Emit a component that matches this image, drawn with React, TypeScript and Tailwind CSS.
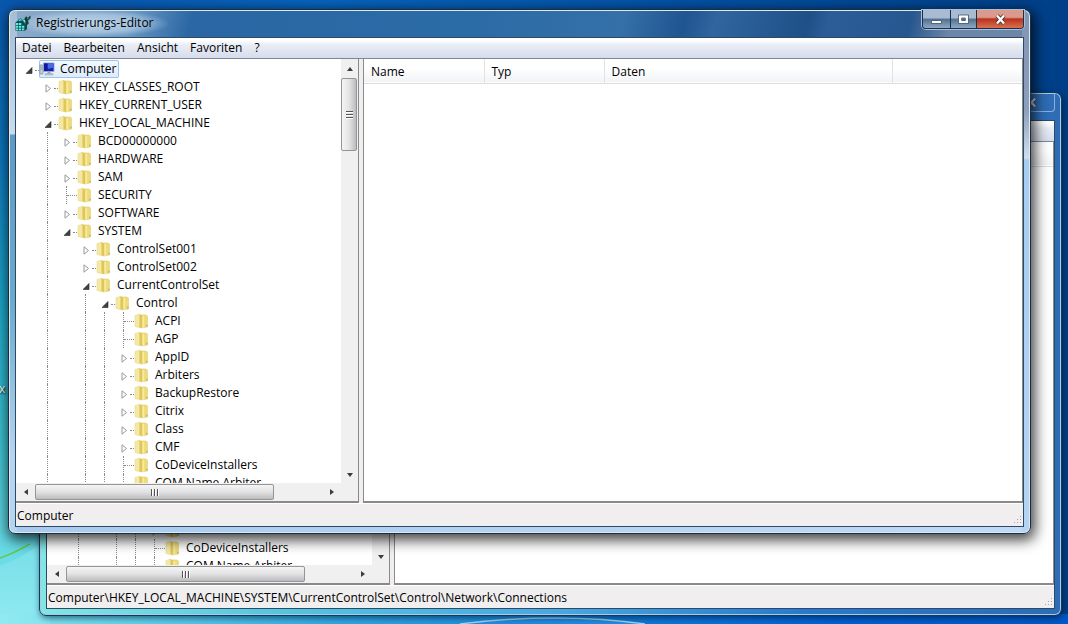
import clsx from "clsx"

type TreeNode = {
    label: string;
    level: number;
    state: "open" | "closed" | "leaf";
};

const nodes: TreeNode[] = [
    { label: "Computer", level: 0, state: "open" },
    { label: "HKEY_CLASSES_ROOT", level: 1, state: "closed" },
    { label: "HKEY_CURRENT_USER", level: 1, state: "closed" },
    { label: "HKEY_LOCAL_MACHINE", level: 1, state: "open" },
    { label: "BCD00000000", level: 2, state: "closed" },
    { label: "HARDWARE", level: 2, state: "closed" },
    { label: "SAM", level: 2, state: "closed" },
    { label: "SECURITY", level: 2, state: "leaf" },
    { label: "SOFTWARE", level: 2, state: "closed" },
    { label: "SYSTEM", level: 2, state: "open" },
    { label: "ControlSet001", level: 3, state: "closed" },
    { label: "ControlSet002", level: 3, state: "closed" },
    { label: "CurrentControlSet", level: 3, state: "open" },
    { label: "Control", level: 4, state: "open" },
    { label: "ACPI", level: 5, state: "leaf" },
    { label: "AGP", level: 5, state: "leaf" },
    { label: "AppID", level: 5, state: "closed" },
    { label: "Arbiters", level: 5, state: "closed" },
    { label: "BackupRestore", level: 5, state: "closed" },
    { label: "Citrix", level: 5, state: "closed" },
    { label: "Class", level: 5, state: "closed" },
    { label: "CMF", level: 5, state: "closed" },
    { label: "CoDeviceInstallers", level: 5, state: "leaf" },
    { label: "COM Name Arbiter", level: 5, state: "leaf" },
];

// levels whose branch goes on below the visible part of the tree
const openBranches = [1, 3, 4];

const menus = ["Datei", "Bearbeiten", "Ansicht", "Favoriten", "?"];

const FolderIcon = () => (
    <svg viewBox="0 0 16 16" className="h-4 w-4 shrink-0" aria-hidden="true">
        <path d="M1 2.500 6 1.200v13.500L1 13.400z" fill="#f4e9a4" stroke="#e6d88c" strokeWidth=".6" />
        <path d="M7.500 2h4.200l1.700.9V14l-5.900.8z" fill="#eedb7c" stroke="#dfc860" strokeWidth=".6" />
        <path d="m5.500.9 2.800 1.500v13.200l-2.800-1.400z" fill="#e2c557" />
        <path d="m8.300 3 1.800-.6v12l-1.800.6z" fill="#f6ea9e" />
        <path d="M12 11.800h1.600v1.700H12z" fill="#b3bb74" />
    </svg>
)

const ComputerIcon = () => (
    <svg viewBox="0 0 16 16" className="h-4 w-4 shrink-0" aria-hidden="true">
        <path d="M1 4h3v9H1z" fill="#c9d4de" stroke="#7d8b99" strokeWidth=".7" />
        <path d="M1.800 6h1.500M1.800 8h1.500" stroke="#5c6b78" strokeWidth=".7" />
        <path d="M4.500 2h10.500v8.500H4.500z" fill="#1621b8" stroke="#9aaccd" strokeWidth=".9" />
        <path d="M8.500 2.500h6v4l-6 1.500z" fill="#4a6be0" />
        <path d="M5 2.500h3.500v7.500H5z" fill="#1017a0" />
        <path d="M8.500 11h3v1.500h-3z" fill="#98a6b4" />
        <path d="M6.500 12.500h7l.8 1.500H5.700z" fill="#c3ccd5" stroke="#8996a3" strokeWidth=".5" />
    </svg>
)

const RegistryIcon = () => (
    <svg viewBox="0 0 16 16" className="h-4 w-4 shrink-0" aria-hidden="true">
        <path d="M.5 7.500 3 5.500l9 .5v8l-2 1.800H.5z" fill="#0a4b50" />
        <path d="M1 8h2.300v2H1zM4 8h2.300v2H4zM1 10.700h2.300v2H1zM4 10.700h2.300v2H4zM7 10.700h2.300v2H7zM1 13.400h2.300v1.800H1zM4 13.400h2.300v1.800H4zM7 13.400h2.300v1.800H7z" fill="#66eee2" />
        <path d="M7 5.500 9.500 4l3 2.500-2 3z" fill="#0f7f78" />
        <path d="m8 5.500 1.500-.7 1.700 1.500-1.200 1.500z" fill="#7ff3e6" />
        <path d="m9.500 3.500 1.500-2.300 1.600 1.600L15.500.5v3l-2.500 2 .8 3-2.300 2-1-3.500z" fill="#173c3a" />
        <path d="m12 3.500 2.500-1.500-1.700 2.500z" fill="#3fae9f" />
        <path d="M3 5.200 5.500 3.500l1.700 1.200-2.400 2z" fill="#47cfc3" stroke="#0a4b50" strokeWidth=".5" />
    </svg>
)

const Expander = ({ state }: { state: TreeNode["state"] }) => {
    if (state === "leaf") {
        return (
            <span className="flex h-full w-[19px] shrink-0 items-center">
                <span className="ml-2 h-full border-l border-dotted border-[#8a8a8a]" />
                <span className="flex-1 border-t border-dotted border-[#8a8a8a]" />
            </span>
        )
    }
    return (
        <span className="flex h-full w-[19px] shrink-0 items-center pt-[2px] pl-[6px]">
            <svg viewBox="0 0 7 9" className="h-[9px] w-[7px]" aria-hidden="true">
                {state === "open"
                    ? <path d="M6 1.500V7.500H0z" fill="#404040" stroke="#262626" strokeWidth=".6" />
                    : <path d="M1 .8 5.500 4.500 1 8.200z" fill="#fff" stroke="#989898" strokeWidth="1" />}
            </svg>
            <span className="ml-[2px] flex-1 border-t border-dotted border-[#8a8a8a]" />
        </span>
    )
}

const TreeRow = ({ node }: { node: TreeNode }) => {
    const root = node.level === 0;
    return (
        <li
            role="treeitem"
            aria-level={node.level + 1}
            aria-selected={root}
            aria-expanded={node.state === "leaf" ? undefined : node.state === "open"}
            className="flex h-[18px] items-center pl-1"
        >
            {Array.from({ length: node.level }, (_, level) => (
                <span key={level} className="h-full w-[19px] shrink-0 pl-2">
                    {openBranches.includes(level) && (
                        <span className="block h-full border-l border-dotted border-[#8a8a8a]" />
                    )}
                </span>
            ))}
            <Expander state={node.state} />
            <span
                className={clsx(
                    "flex h-[18px] items-center gap-[5px] whitespace-nowrap",
                    root && "rounded-[2px] bg-gradient-to-b from-[#f3f8fe] to-[#dcebfc] pr-[2px] ring-1 ring-[#9cc3ec] ring-inset"
                )}
            >
                {root ? <ComputerIcon /> : <FolderIcon />}
                <span className="leading-4">{node.label}</span>
            </span>
        </li>
    )
}

const Arrow = ({ d }: { d: string }) => (
    <svg viewBox="0 0 8 8" className="h-2 w-2" aria-hidden="true">
        <path d={d} fill="#3c3c3c" />
    </svg>
)

const VerticalScroll = () => (
    <div className="flex w-[17px] shrink-0 flex-col bg-[#f0f0f0]">
        <button aria-label="Nach oben" className="flex h-[19px] items-center justify-center">
            <Arrow d="M4 2 7 6H1z" />
        </button>
        <div className="mr-px flex h-[73px] flex-col items-center justify-center gap-px rounded-[2px] border border-[#959595] bg-gradient-to-r from-[#f5f5f5] via-[#e4e4e6] to-[#bcbcc0]">
            <span className="h-[2px] w-[7px] border-t border-[#555] bg-white" />
            <span className="h-[2px] w-[7px] border-t border-[#555] bg-white" />
            <span className="h-[2px] w-[7px] border-t border-[#555] bg-white" />
        </div>
        <button aria-label="Nach unten" className="mt-auto flex h-[17px] items-center justify-center">
            <Arrow d="M4 6 7 2H1z" />
        </button>
    </div>
)

const HorizontalScroll = () => (
    <div className="flex h-[18px] shrink-0 bg-[#f0f0f0] pr-[17px]">
        <button aria-label="Nach links" className="flex w-[19px] items-center justify-center">
            <Arrow d="M2 4 6 1v6z" />
        </button>
        <div className="my-px flex w-[239px] items-center justify-center gap-px rounded-[2px] border border-[#959595] bg-gradient-to-b from-[#f5f5f5] via-[#e2e2e4] to-[#bcbcc0]">
            <span className="h-[7px] w-[2px] border-l border-[#555] bg-white" />
            <span className="h-[7px] w-[2px] border-l border-[#555] bg-white" />
            <span className="h-[7px] w-[2px] border-l border-[#555] bg-white" />
        </div>
        <button aria-label="Nach rechts" className="ml-auto flex w-[19px] items-center justify-center">
            <Arrow d="M6 4 2 1v6z" />
        </button>
    </div>
)

const WindowButtons = ({ active }: { active: boolean }) => (
    <div
        className={clsx(
            "flex h-[19px] rounded-b-[4px] border border-t-0",
            active ? "border-[#17304f] shadow-[0_0_0_1px_#a9bfd8]" : "border-[#8eb1dc]"
        )}
    >
        <button
            aria-label="Minimieren"
            className={clsx(
                "flex w-[28px] items-center justify-center rounded-bl-[3px] border-r",
                active ? "border-[#17304f] bg-gradient-to-b from-[#a9bbd0] from-45% via-[#52708f] via-50% to-[#8ea9c5]" : "border-[#8eb1dc]"
            )}
        >
            <svg viewBox="0 0 13 11" className="h-[11px] w-[13px]" aria-hidden="true">
                <path d="M1.500 6.500h10v3h-10z" fill="#fff" stroke="#3d4e61" strokeWidth=".8" />
            </svg>
        </button>
        <button
            aria-label="Maximieren"
            className={clsx(
                "flex w-[26px] items-center justify-center border-r",
                active ? "border-[#17304f] bg-gradient-to-b from-[#a9bbd0] from-45% via-[#52708f] via-50% to-[#8ea9c5]" : "border-[#8eb1dc]"
            )}
        >
            <svg viewBox="0 0 13 11" className="h-[11px] w-[13px]" aria-hidden="true">
                <path d="M1.500 1h10v8.500h-10zM4.700 4v2.500h3.600V4z" fill="#fff" fillRule="evenodd" stroke="#3d4e61" strokeWidth=".8" />
            </svg>
        </button>
        <button
            aria-label="Schließen"
            className={clsx(
                "flex w-[46px] items-center justify-center rounded-br-[3px]",
                active && "bg-gradient-to-b from-[#dc9a8c] from-40% via-[#b8301c] via-50% to-[#d9704f]"
            )}
        >
            <svg viewBox="0 0 13 11" className="h-[11px] w-[13px]" aria-hidden="true">
                <path d="m3 1.500 7 8M10 1.500l-7 8" stroke={active ? "#4a2a2a" : "#2c4a74"} strokeWidth="4" />
                <path d="m3 1.500 7 8M10 1.500l-7 8" stroke={active ? "#fff" : "#c9d4e2"} strokeWidth="2.400" />
            </svg>
        </button>
    </div>
)

const RegistryWindow = ({ active, path, className }: { active: boolean; path: string; className: string }) => (
    <section
        aria-label="Registrierungs-Editor"
        className={clsx("absolute flex flex-col rounded-[7px] border px-[6px] pb-[6px] inset-ring-1", className)}
    >
        <header className="flex h-[27px] shrink-0 items-start justify-between">
            <div
                className={clsx(
                    "flex h-full items-center gap-[5px] pr-4 pb-px",
                    active && "bg-[radial-gradient(closest-side,rgba(205,225,242,0.8),rgba(205,225,242,0.5)_65%,transparent)]"
                )}
            >
                <RegistryIcon />
                <h1>Registrierungs-Editor</h1>
            </div>
            <WindowButtons active={active} />
        </header>

        <div className="flex min-h-0 flex-1 flex-col border border-[#2c4966] bg-[#f0eeee]">
            <nav className="flex h-[21px] shrink-0 items-center border-b border-[#7f8796] bg-gradient-to-b from-white from-10% via-[#e9edf5] via-35% to-[#d6dcec]">
                {menus.map((menu) => (
                    <button key={menu} className="px-[6px]">{menu}</button>
                ))}
            </nav>

            <main className="flex min-h-0 flex-1">
                <div className="flex w-[343px] shrink-0 flex-col border-r border-b-2 border-[#8a8a8a] bg-white">
                    <div className="flex min-h-0 flex-1">
                        <ul role="tree" aria-label="Schlüssel" className="flex-1 overflow-hidden pt-px">
                            {nodes.map((node) => (
                                <TreeRow key={node.label} node={node} />
                            ))}
                        </ul>
                        <VerticalScroll />
                    </div>
                    <HorizontalScroll />
                </div>
                <div className="ml-1 flex-1 border-r border-b-2 border-l border-[#8a8a8a] bg-white">
                    <table className="w-full table-fixed border-collapse text-left">
                        <thead>
                            <tr className="h-6 border-b border-[#d9dbde] bg-gradient-to-b from-white from-40% to-[#f1f3f5]">
                                <th className="w-[120px] border-r border-[#dfe2e6] px-[7px] pt-[2px] pb-0 font-normal">Name</th>
                                <th className="w-[120px] border-r border-[#dfe2e6] px-[7px] pt-[2px] pb-0 font-normal">Typ</th>
                                <th className="w-[288px] border-r border-[#dfe2e6] px-[7px] pt-[2px] pb-0 font-normal">Daten</th>
                                <th aria-label="Leer" />
                            </tr>
                        </thead>
                    </table>
                </div>
            </main>

            <footer className="flex h-[23px] shrink-0 items-center justify-between border-t border-white pt-[2px] pl-px">
                <span>{path}</span>
                <svg viewBox="0 0 12 12" className="h-3 w-3 self-end" aria-hidden="true">
                    <path d="M9 2h1v1H9zM9 5h1v1H9zM9 8h1v1H9zM6 5h1v1H6zM6 8h1v1H6zM3 8h1v1H3z" fill="#a9a6a6" />
                </svg>
            </footer>
        </div>
    </section>
)

export default function App() {
    return (
        <div className="relative h-screen min-h-[480px] overflow-hidden [background:linear-gradient(to_right,#86e8f0,#62d4ec_12%,#2fa8e4_32%,#0f7cdc_58%,#0060d4_80%,#0058c8)_bottom/100%_10px_no-repeat,linear-gradient(to_right,transparent_3%,#0765c0_30%,#0452a6_65%,#003f88),linear-gradient(#0857b0,#0c78be_25%,#1faacb_50%,#3fc6d4_72%,#86e8f0)] font-['Open_Sans','Noto_Sans',sans-serif] text-[12px] leading-4 text-black">
            <svg viewBox="0 0 60 80" className="absolute bottom-0 left-0 h-20 w-[60px]" aria-hidden="true">
                <path d="M0 14C18 8 30 0 45-10" fill="none" stroke="#63c94e" strokeWidth="1.500" />
                <path d="M0 22C18 15 32 6 50-6V80H0z" fill="#a5f0f5" opacity=".3" />
            </svg>
            <svg viewBox="0 0 200 10" className="absolute bottom-0 left-[460px] h-[10px] w-[200px]" aria-hidden="true">
                <path d="M0 10C60 2 130 2 185 10" fill="#1f8ce4" stroke="#a8d4ee" strokeWidth="1.500" />
            </svg>
            <span className="absolute top-[381px] -left-px text-white [text-shadow:1px_1px_2px_#000]">x</span>

            <RegistryWindow
                active={false}
                path="Computer\HKEY_LOCAL_MACHINE\SYSTEM\CurrentControlSet\Control\Network\Connections"
                className="top-[92px] right-[6px] bottom-2 left-[39px] border-[#16385e] bg-[linear-gradient(to_right,#84e6e2,#54c2de_25%,#4aa8e0_50%,#2a78cc_75%,#2f6cb4)] inset-ring-[#9fd0ea] shadow-[1px_2px_6px_rgba(0,20,40,0.6)]"
            />
            <RegistryWindow
                active
                path="Computer"
                className="top-[9px] right-[37px] bottom-[90px] left-2 border-[#1b2c3c] [background:linear-gradient(#a5bdd6,#c8dcec_124px,#5f9ac4_125px,#6aaacb_55%,#b4d4f0_85%)_left/8px_100%_no-repeat,linear-gradient(#8196b4,#8c9fbc_100px,#d0def0_148px,#a6cdf4_150px,#b4d4f4)_right/8px_100%_no-repeat,linear-gradient(105deg,#8dacca,#6d9ac4_12%,#2a67a4_18%,#2b6ba6_45%,#3570a8_60%,#1f5590_66%,#30659e_69%,#1f5088_78%,#2c5d97_80%,#27578f_88%,#6d86a8_92%)_top/100%_28px_no-repeat,linear-gradient(to_right,#a9caee,#c0daf6)] inset-ring-[#dceaf6] shadow-[2px_4px_14px_2px_rgba(0,0,0,0.75)]"
            />
        </div>
    )
}
